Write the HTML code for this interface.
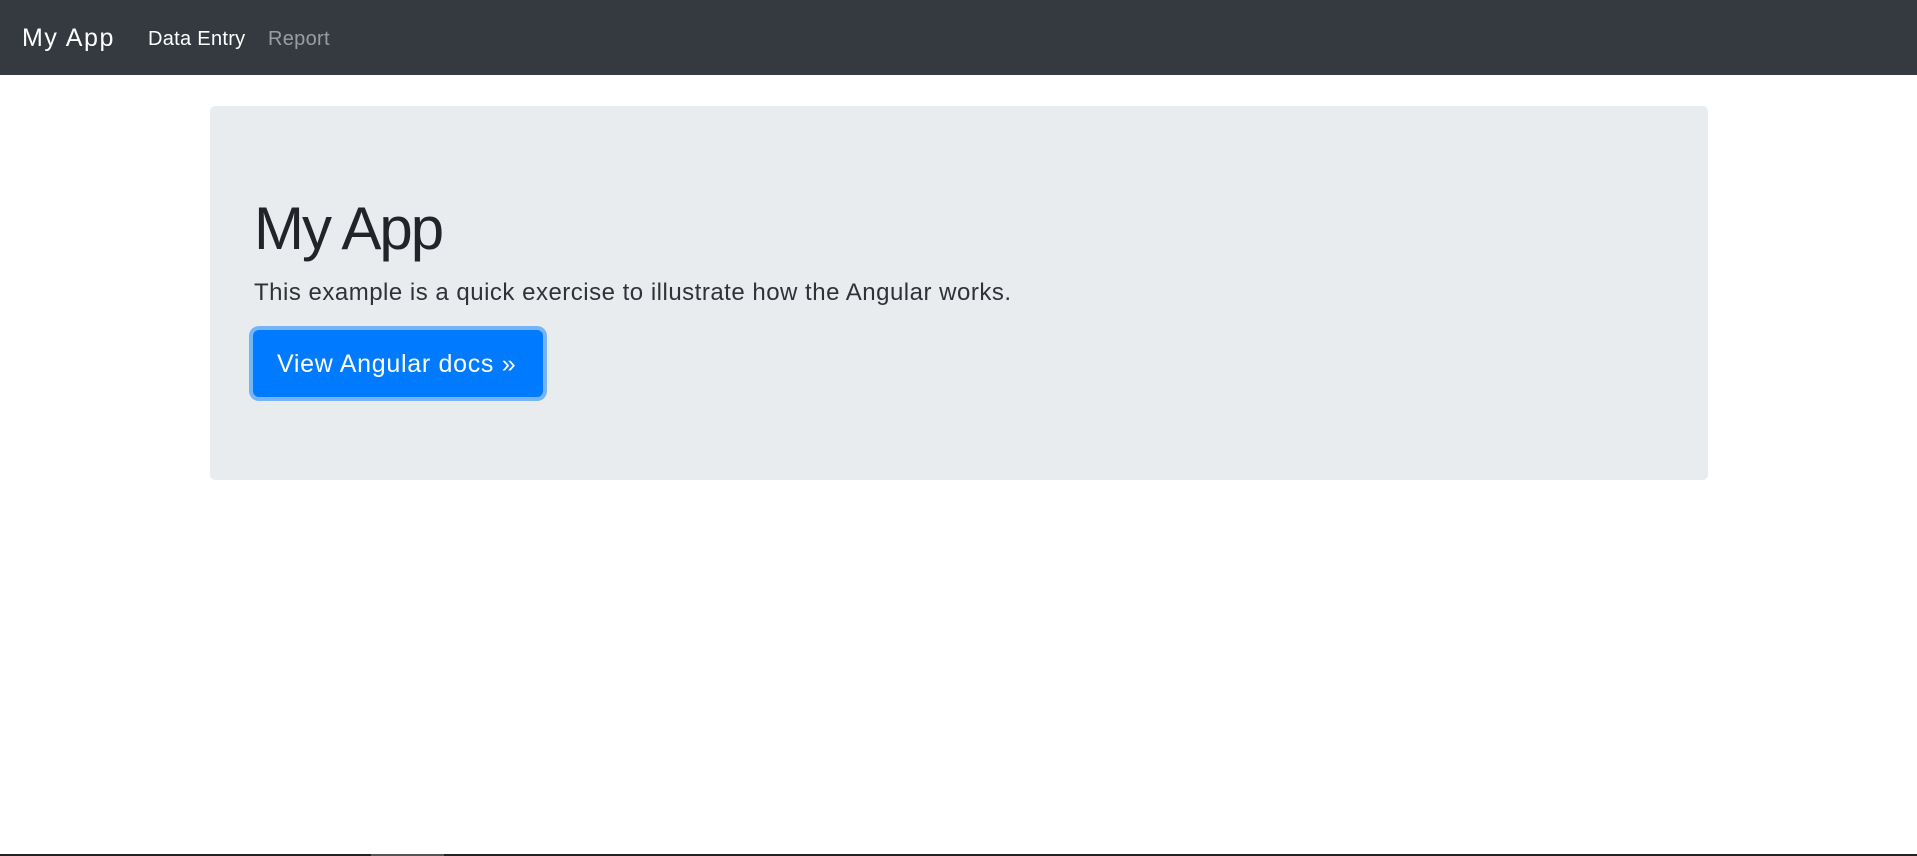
<!DOCTYPE html>
<html><head><meta charset="utf-8"><style>
*{margin:0;padding:0;box-sizing:border-box}
body{width:1917px;height:856px;background:#fff;font-family:"Liberation Sans",sans-serif;position:relative;overflow:hidden}
.nav{position:absolute;left:0;top:0;width:1917px;height:75px;background:#343a40}
.brand{position:absolute;left:22px;top:23px;font-size:25px;line-height:30px;color:#fff;letter-spacing:1.6px}
.l{position:absolute;top:27px;font-size:20px;line-height:24px;letter-spacing:0.3px}
.jum{position:absolute;left:210px;top:106px;width:1498px;height:374px;background:#e9ecef;border-radius:5px}
h1{position:absolute;left:254px;top:188px;font-size:60px;line-height:82px;font-weight:normal;color:#212529;letter-spacing:-2px}
.lead{position:absolute;left:254px;top:275px;font-size:24px;line-height:36px;color:#2f3337;letter-spacing:0.5px;white-space:nowrap}
.btn{position:absolute;left:253px;top:330px;width:290px;height:67px;background:#007bff;border:1px solid #007bff;border-radius:6px;box-shadow:0 0 0 4px rgba(0,123,255,.5);color:#fff;font-size:25px;line-height:67px;padding-left:23px;letter-spacing:0.7px;white-space:nowrap}
.bar{position:absolute;left:0;top:854px;width:1917px;height:2px;background:#222}
.bar2{position:absolute;left:371px;top:854px;width:73px;height:2px;background:#555}
</style></head><body>
<div class="nav"><div class="brand">My App</div><div class="l" style="left:148px;color:#fff">Data Entry</div><div class="l" style="left:268px;color:rgba(255,255,255,.5)">Report</div></div>
<div class="jum"></div>
<h1>My App</h1>
<div class="lead">This example is a quick exercise to illustrate how the Angular works.</div>
<div class="btn">View Angular docs »</div>
<div class="bar"></div><div class="bar2"></div>
</body></html>
